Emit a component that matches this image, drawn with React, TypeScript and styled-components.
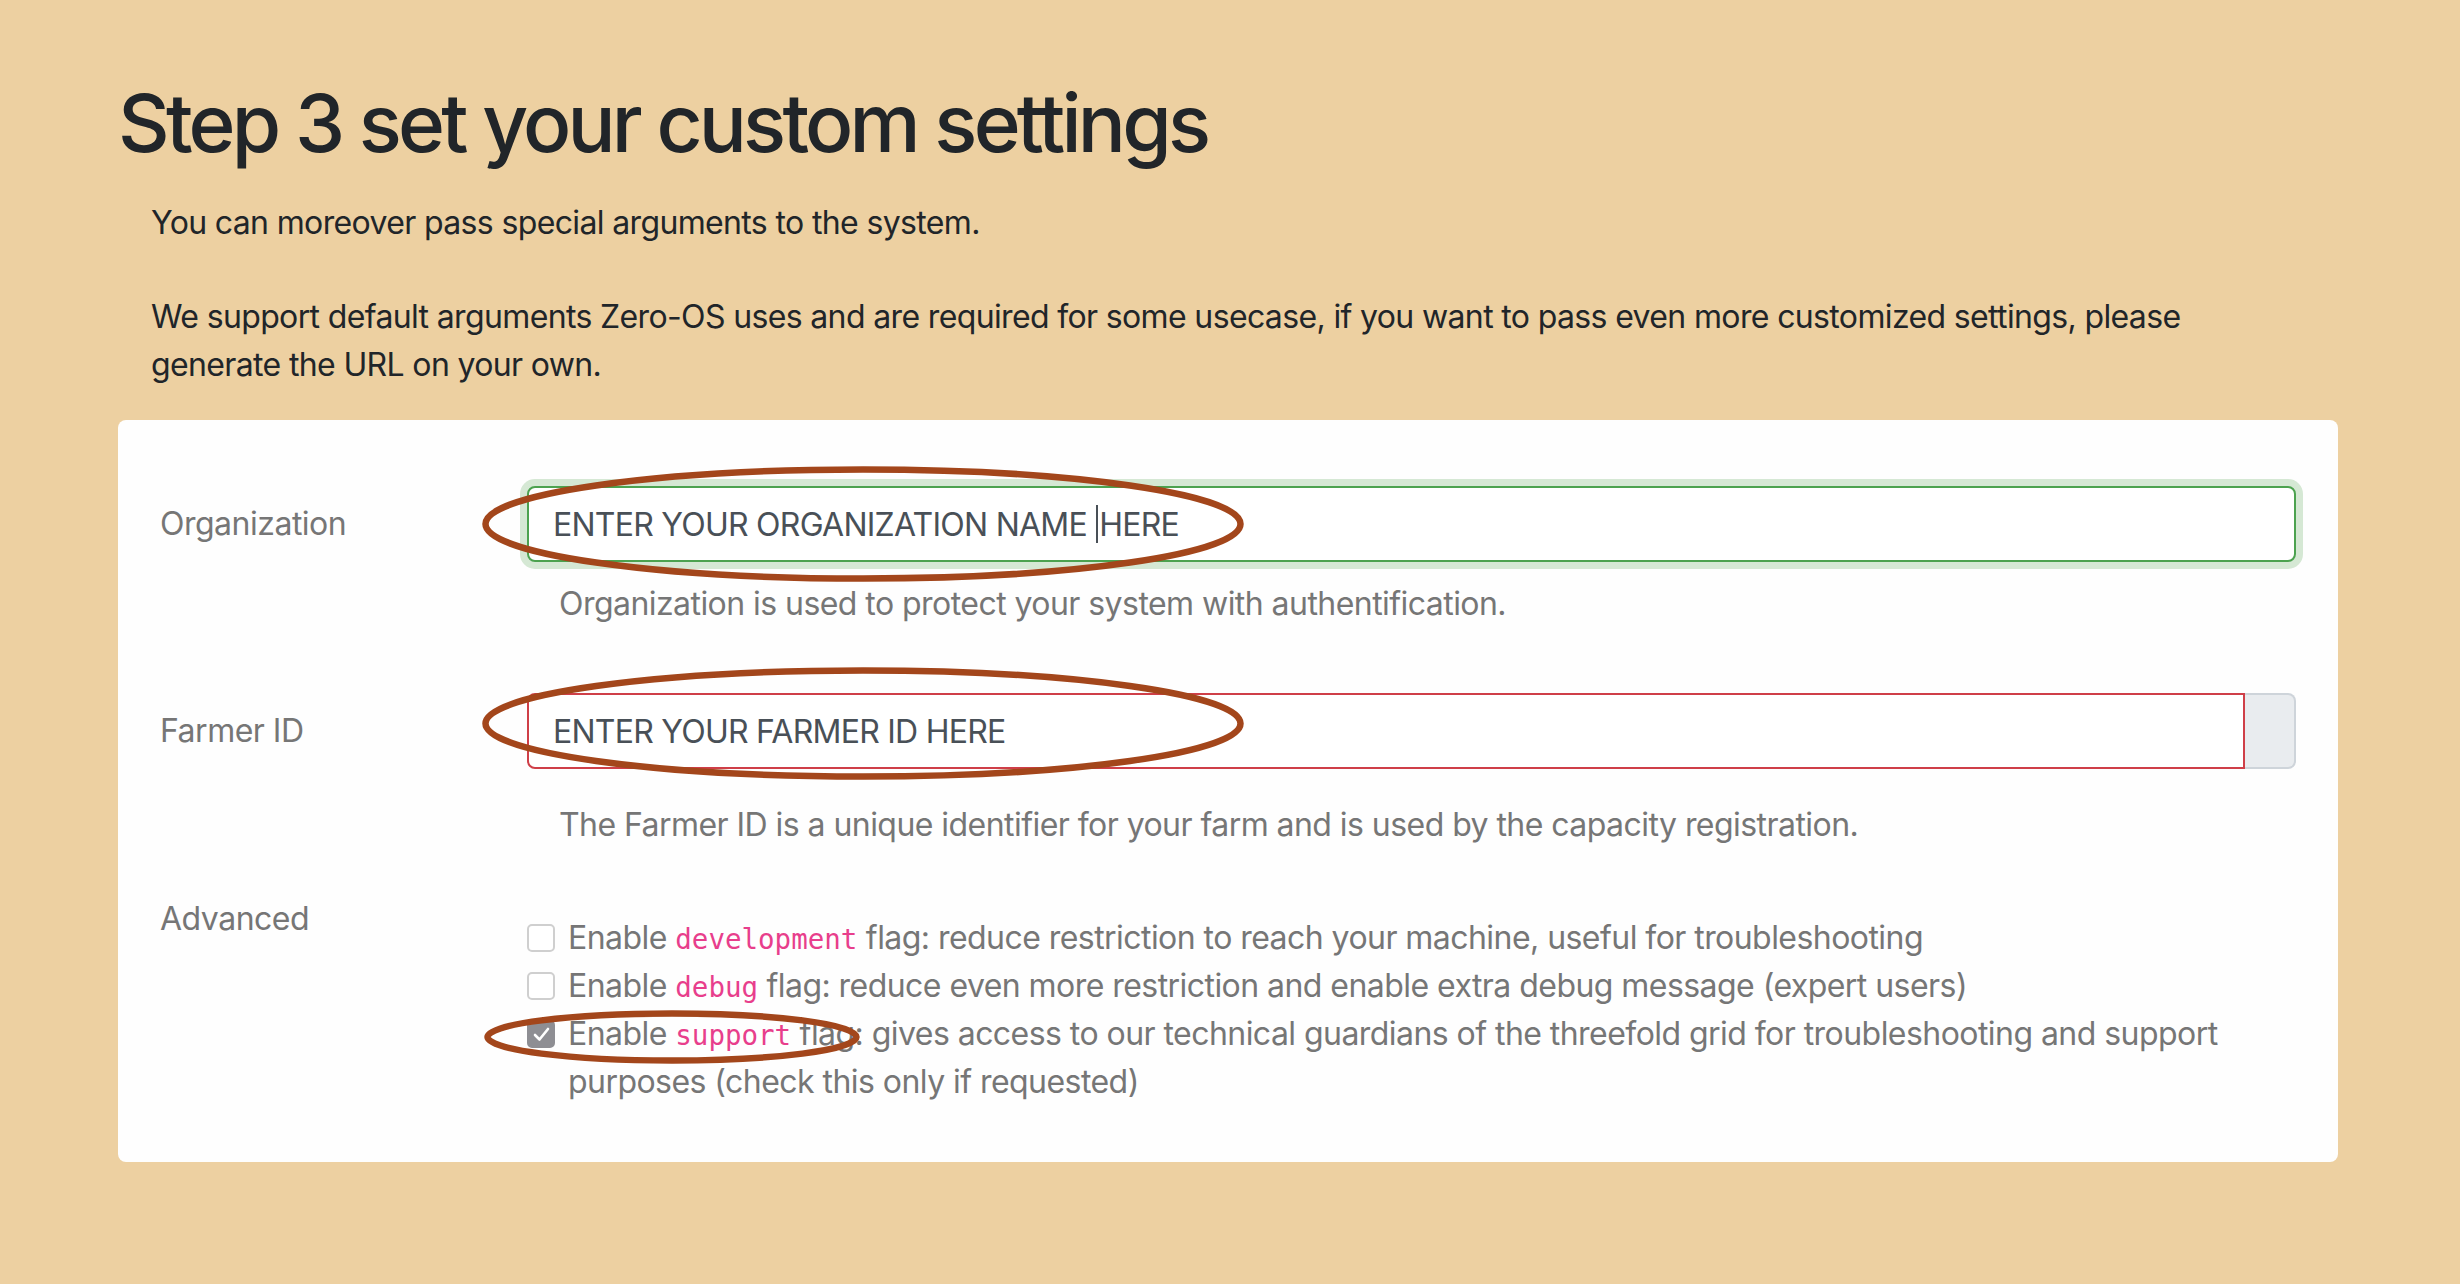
import React from "react";
import styled, { createGlobalStyle } from "styled-components";

const GlobalStyle = createGlobalStyle`
  html, body { margin: 0; padding: 0; }
  body {
    background: #edd0a1;
    font-family: Inter, "Noto Sans", "Liberation Sans", sans-serif;
    -webkit-font-smoothing: antialiased;
  }
  * { box-sizing: border-box; }
`;

const Page = styled.main`
  min-height: 1284px;
  padding: 75px 122px 0 118px;
`;

const Title = styled.h1`
  margin: 0 0 28px;
  font-size: 80px;
  line-height: 96px;
  font-weight: 500;
  letter-spacing: -3.8px;
  color: #212529;
`;

const Intro = styled.div`
  padding: 0 72px 0 33px;
  color: #212529;
  font-size: 32px;
  line-height: 48px;
  letter-spacing: -0.64px;
`;

const Para = styled.p<{ $gap?: number }>`
  margin: 0 0 ${(p) => p.$gap ?? 0}px;
`;

const Card = styled.section`
  margin-top: 31px;
  background: #fefefe;
  border-radius: 8px;
  padding: 66px 42px 56px 42px;
`;

const Row = styled.div<{ $gap?: number }>`
  display: grid;
  grid-template-columns: 367px 1fr;
  margin-bottom: ${(p) => p.$gap ?? 0}px;
`;

const Label = styled.div<{ $h?: number }>`
  font-size: 32px;
  line-height: ${(p) => p.$h ?? 76}px;
  letter-spacing: -0.5px;
  color: #767676;
`;

const Control = styled.div`
  position: relative;
`;

const InputGroup = styled.div`
  display: flex;
  height: 76px;
`;

const FieldBox = styled.div<{ $state: "valid" | "invalid" }>`
  flex: 1;
  height: 76px;
  padding: 0 24px;
  display: flex;
  align-items: center;
  font-size: 32px;
  letter-spacing: -0.75px;
  color: #495057;
  background: #fff;
  white-space: pre;
  border: 2px solid ${(p) => (p.$state === "valid" ? "#4ca24f" : "#cf3f48")};
  border-radius: ${(p) => (p.$state === "valid" ? "8px" : "8px 0 0 8px")};
  box-shadow: ${(p) => (p.$state === "valid" ? "0 0 0 7px #d5e8d4" : "none")};
`;

const Caret = styled.span`
  display: inline-block;
  width: 2px;
  height: 38px;
  background: #495057;
  margin: 0 1px;
`;

const Append = styled.div`
  width: 51px;
  background: #e9ecef;
  border: 2px solid #ced4da;
  border-left: none;
  border-radius: 0 8px 8px 0;
`;

const Help = styled.div<{ $top: number }>`
  margin-top: ${(p) => p.$top}px;
  padding-left: 32px;
  font-size: 32px;
  line-height: 48px;
  letter-spacing: -0.55px;
  color: #767676;
`;

const Checks = styled.div`
  padding-top: 19px;
  display: flex;
  flex-direction: column;
`;

const CheckRow = styled.div`
  position: relative;
  display: grid;
  grid-template-columns: 28px 1fr;
  column-gap: 13px;
  font-size: 32px;
  line-height: 48px;
  letter-spacing: -0.55px;
  color: #767676;
  padding-right: 50px;
`;

const Box = styled.span<{ $checked?: boolean }>`
  margin-top: 10px;
  width: 28px;
  height: 28px;
  border-radius: 5px;
  border: 2px solid ${(p) => (p.$checked ? "#8e8e93" : "#cfcfcf")};
  background: ${(p) => (p.$checked ? "#8e8e93" : "#fff")};
  display: flex;
  align-items: center;
  justify-content: center;
`;

const Code = styled.code`
  font-family: "DejaVu Sans Mono", "Liberation Mono", monospace;
  font-size: 27.5px;
  line-height: 1;
  letter-spacing: 0;
  color: #e83e8c;
`;

const Ring = styled.svg<{ $l: number; $t: number }>`
  position: absolute;
  left: ${(p) => p.$l}px;
  top: ${(p) => p.$t}px;
  overflow: visible;
  pointer-events: none;
`;

function Ellipse({ l, t, w, h }: { l: number; t: number; w: number; h: number }) {
  return (
    <Ring $l={l} $t={t} width={w} height={h} viewBox={`0 0 ${w} ${h}`}>
      <ellipse
        cx={w / 2}
        cy={h / 2}
        rx={w / 2 - 3.5}
        ry={h / 2 - 3.5}
        fill="none"
        stroke="#a3461b"
        strokeWidth={6.5}
      />
    </Ring>
  );
}

function Check({ checked }: { checked?: boolean }) {
  return (
    <Box $checked={checked}>
      {checked && (
        <svg width="17" height="15" viewBox="0 0 17 15">
          <path d="M2 8 L6.5 12.5 L15 2" fill="none" stroke="#fff" strokeWidth="2.6" strokeLinecap="round" strokeLinejoin="round" />
        </svg>
      )}
    </Box>
  );
}

export default function App() {
  return (
    <>
      <GlobalStyle />
      <Page>
        <Title>Step 3 set your custom settings</Title>
        <Intro>
          <Para $gap={46}>You can moreover pass special arguments to the system.</Para>
          <Para>
            We support default arguments Zero-OS uses and are required for some usecase, if you want to pass even more
            customized settings, please generate the URL on your own.
          </Para>
        </Intro>
        <Card>
          <Row $gap={65}>
            <Label>Organization</Label>
            <Control>
              <InputGroup>
                <FieldBox $state="valid">
                  ENTER YOUR ORGANIZATION NAME <Caret />HERE
                </FieldBox>
              </InputGroup>
              <Help $top={18}>Organization is used to protect your system with authentification.</Help>
              <Ellipse l={-45} t={-20} w={762} h={116} />
            </Control>
          </Row>
          <Row $gap={46}>
            <Label>Farmer ID</Label>
            <Control>
              <InputGroup>
                <FieldBox $state="invalid">ENTER YOUR FARMER ID HERE</FieldBox>
                <Append />
              </InputGroup>
              <Help $top={32}>
                The Farmer ID is a unique identifier for your farm and is used by the capacity registration.
              </Help>
              <Ellipse l={-45} t={-26} w={762} h={113} />
            </Control>
          </Row>
          <Row>
            <Label $h={48}>Advanced</Label>
            <Checks>
              <CheckRow>
                <Check />
                <span>
                  Enable <Code>development</Code> flag: reduce restriction to reach your machine, useful for
                  troubleshooting
                </span>
              </CheckRow>
              <CheckRow>
                <Check />
                <span>
                  Enable <Code>debug</Code> flag: reduce even more restriction and enable extra debug message (expert
                  users)
                </span>
              </CheckRow>
              <CheckRow>
                <Check checked />
                <span>
                  Enable <Code>support</Code> flag: gives access to our technical guardians of the threefold grid for
                  troubleshooting and support purposes (check this only if requested)
                </span>
                <Ellipse l={-43} t={0} w={376} h={54} />
              </CheckRow>
            </Checks>
          </Row>
        </Card>
      </Page>
    </>
  );
}
